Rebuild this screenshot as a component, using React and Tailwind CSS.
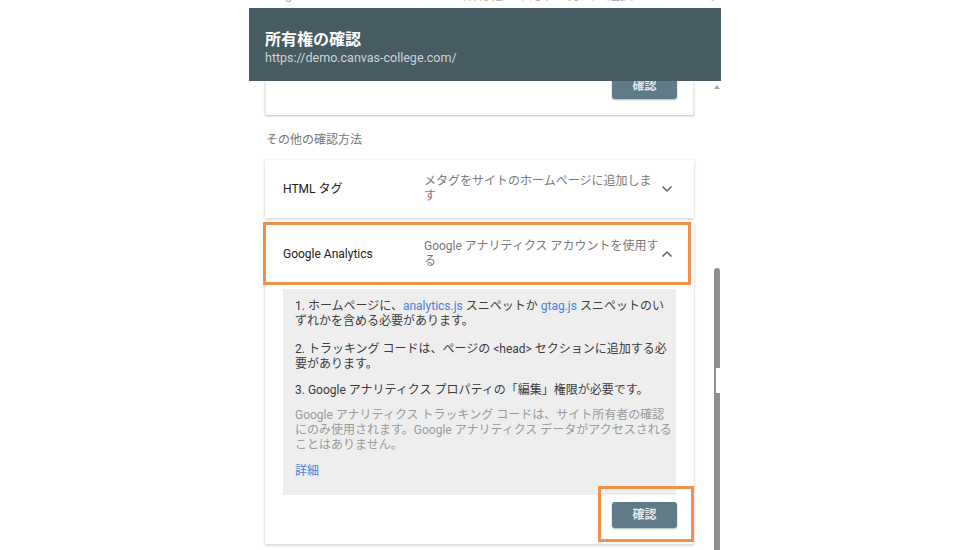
import React from "react";

const font = { fontFamily: "Roboto, 'Noto Sans CJK JP', sans-serif" };

function Chevron({ up }) {
  return (
    <svg width="12" height="8" viewBox="0 0 12 8" className="text-[#616161] shrink-0">
      <path
        d={up ? "M1.5 6.5 L6 2 L10.5 6.5" : "M1.5 1.5 L6 6 L10.5 1.5"}
        fill="none"
        stroke="currentColor"
        strokeWidth="1.5"
      />
    </svg>
  );
}

function ConfirmButton({ className = "" }) {
  return (
    <button
      className={
        "w-[65px] h-[26px] rounded-[3px] bg-[#5f7b89] text-[#e3e9ec] text-[12px] font-bold shadow-[0_1px_2px_rgba(0,0,0,0.3)] " +
        className
      }
    >
      確認
    </button>
  );
}

function MethodRow({ title, desc, up, descWidth }) {
  return (
    <div className="flex items-center h-full pl-[18px] pr-[21px]">
      <div className="w-[141px] shrink-0 text-[12px] text-[#212121]">{title}</div>
      <div className="flex-1 min-w-0">
        <div className={descWidth + " text-[12px] leading-[15px] text-[#7a7a7a]"}>{desc}</div>
      </div>
      <Chevron up={up} />
    </div>
  );
}

export default function App() {
  return (
    <div className="w-[960px] h-[550px] bg-white overflow-hidden pl-[249px]" style={font}>
      <div className="w-[472px] h-[550px] flex flex-col">
        <div className="h-[8px] overflow-hidden">
          <div className="mt-[-13px] pl-[12px] text-[13px] leading-[16px] text-[#b0b0b0] whitespace-nowrap">
            Google Search Console でサイトの所有権を確認する方法を選択してください。確認方法の詳細
          </div>
        </div>

        <div className="h-[73px] bg-[#475b63] pl-[16px] pt-[22px]">
          <div className="text-[16px] leading-[20px] font-bold text-white">所有権の確認</div>
          <div className="text-[12.5px] leading-[16px] text-[#cdd4d8]">https://demo.canvas-college.com/</div>
        </div>

        <div className="flex flex-1 min-h-0">
          <div className="w-[462px] overflow-hidden pl-[16px] pr-[17px]">
            <div className="h-[34px] overflow-hidden bg-white shadow-[0_1px_2px_rgba(0,0,0,0.25)] border-l border-r border-[#ececec] flex justify-end pr-[16px]">
              <ConfirmButton className="mt-[-8px]" />
            </div>

            <div className="mt-[17px] text-[12px] leading-[16px] text-[#757575] pl-[1px]">その他の確認方法</div>

            <div className="mt-[12px] h-[58px] bg-white shadow-[0_1px_3px_rgba(0,0,0,0.22)]">
              <MethodRow
                title="HTML タグ"
                desc="メタグをサイトのホームページに追加します"
                up={false}
                descWidth="w-[234px]"
              />
            </div>

            <div className="mt-[5px] bg-white shadow-[0_1px_3px_rgba(0,0,0,0.22)] relative">
              <div className="h-[62px]">
                <MethodRow
                  title="Google Analytics"
                  desc="Google アナリティクス アカウントを使用する"
                  up={true}
                  descWidth="w-[240px]"
                />
              </div>
              <div className="absolute left-[-2px] top-[-1px] w-[428px] h-[63px] border-[3px] border-[#f1904b] pointer-events-none" />

              <div className="mx-[18px] mt-[4px] bg-[#eeeeee] pl-[12px] pr-[2px] pt-[10px] pb-[16px] text-[12px] leading-[15px]">
                <p className="text-[#3c3c3c]">
                  1. ホームページに、<span className="text-[#4a7fe0]">analytics.js</span> スニペットか{" "}
                  <span className="text-[#4a7fe0]">gtag.js</span> スニペットのいずれかを含める必要があります。
                </p>
                <p className="mt-[13px] text-[#3c3c3c]">
                  2. トラッキング コードは、ページの &lt;head&gt; セクションに追加する必要があります。
                </p>
                <p className="mt-[11px] text-[#3c3c3c]">3. Google アナリティクス プロパティの「編集」権限が必要です。</p>
                <p className="mt-[10px] text-[#9a9a9a]">
                  Google アナリティクス トラッキング コードは、サイト所有者の確認にのみ使用されます。Google アナリティクス データがアクセスされることはありません。
                </p>
                <p className="mt-[11px] text-[#4a7fe0]">詳細</p>
              </div>

              <div className="flex justify-end pr-[17px] pt-[7px] pb-[16px] relative">
                <ConfirmButton />
                <div className="absolute right-0 top-[-9px] w-[96px] h-[56px] border-[3px] border-[#f1904b] pointer-events-none" />
              </div>
            </div>
          </div>

          <div className="w-[10px] flex flex-col">
            <div className="h-[187px] flex justify-center pt-[4px]">
              <svg width="6" height="4" viewBox="0 0 6 4" className="ml-[1px]">
                <path d="M0 4 L3 0 L6 4 Z" fill="#a3a3a3" />
              </svg>
            </div>
            <div className="ml-[3px] w-[6px] flex-1 flex flex-col">
              <div className="h-[100px] bg-[#8f8f8f] rounded-t-[3px]" />
              <div className="h-[25px] flex">
                <div className="w-[2px] bg-[#8f8f8f]" />
              </div>
              <div className="flex-1 bg-[#8f8f8f]" />
            </div>
          </div>
        </div>
      </div>
    </div>
  );
}
